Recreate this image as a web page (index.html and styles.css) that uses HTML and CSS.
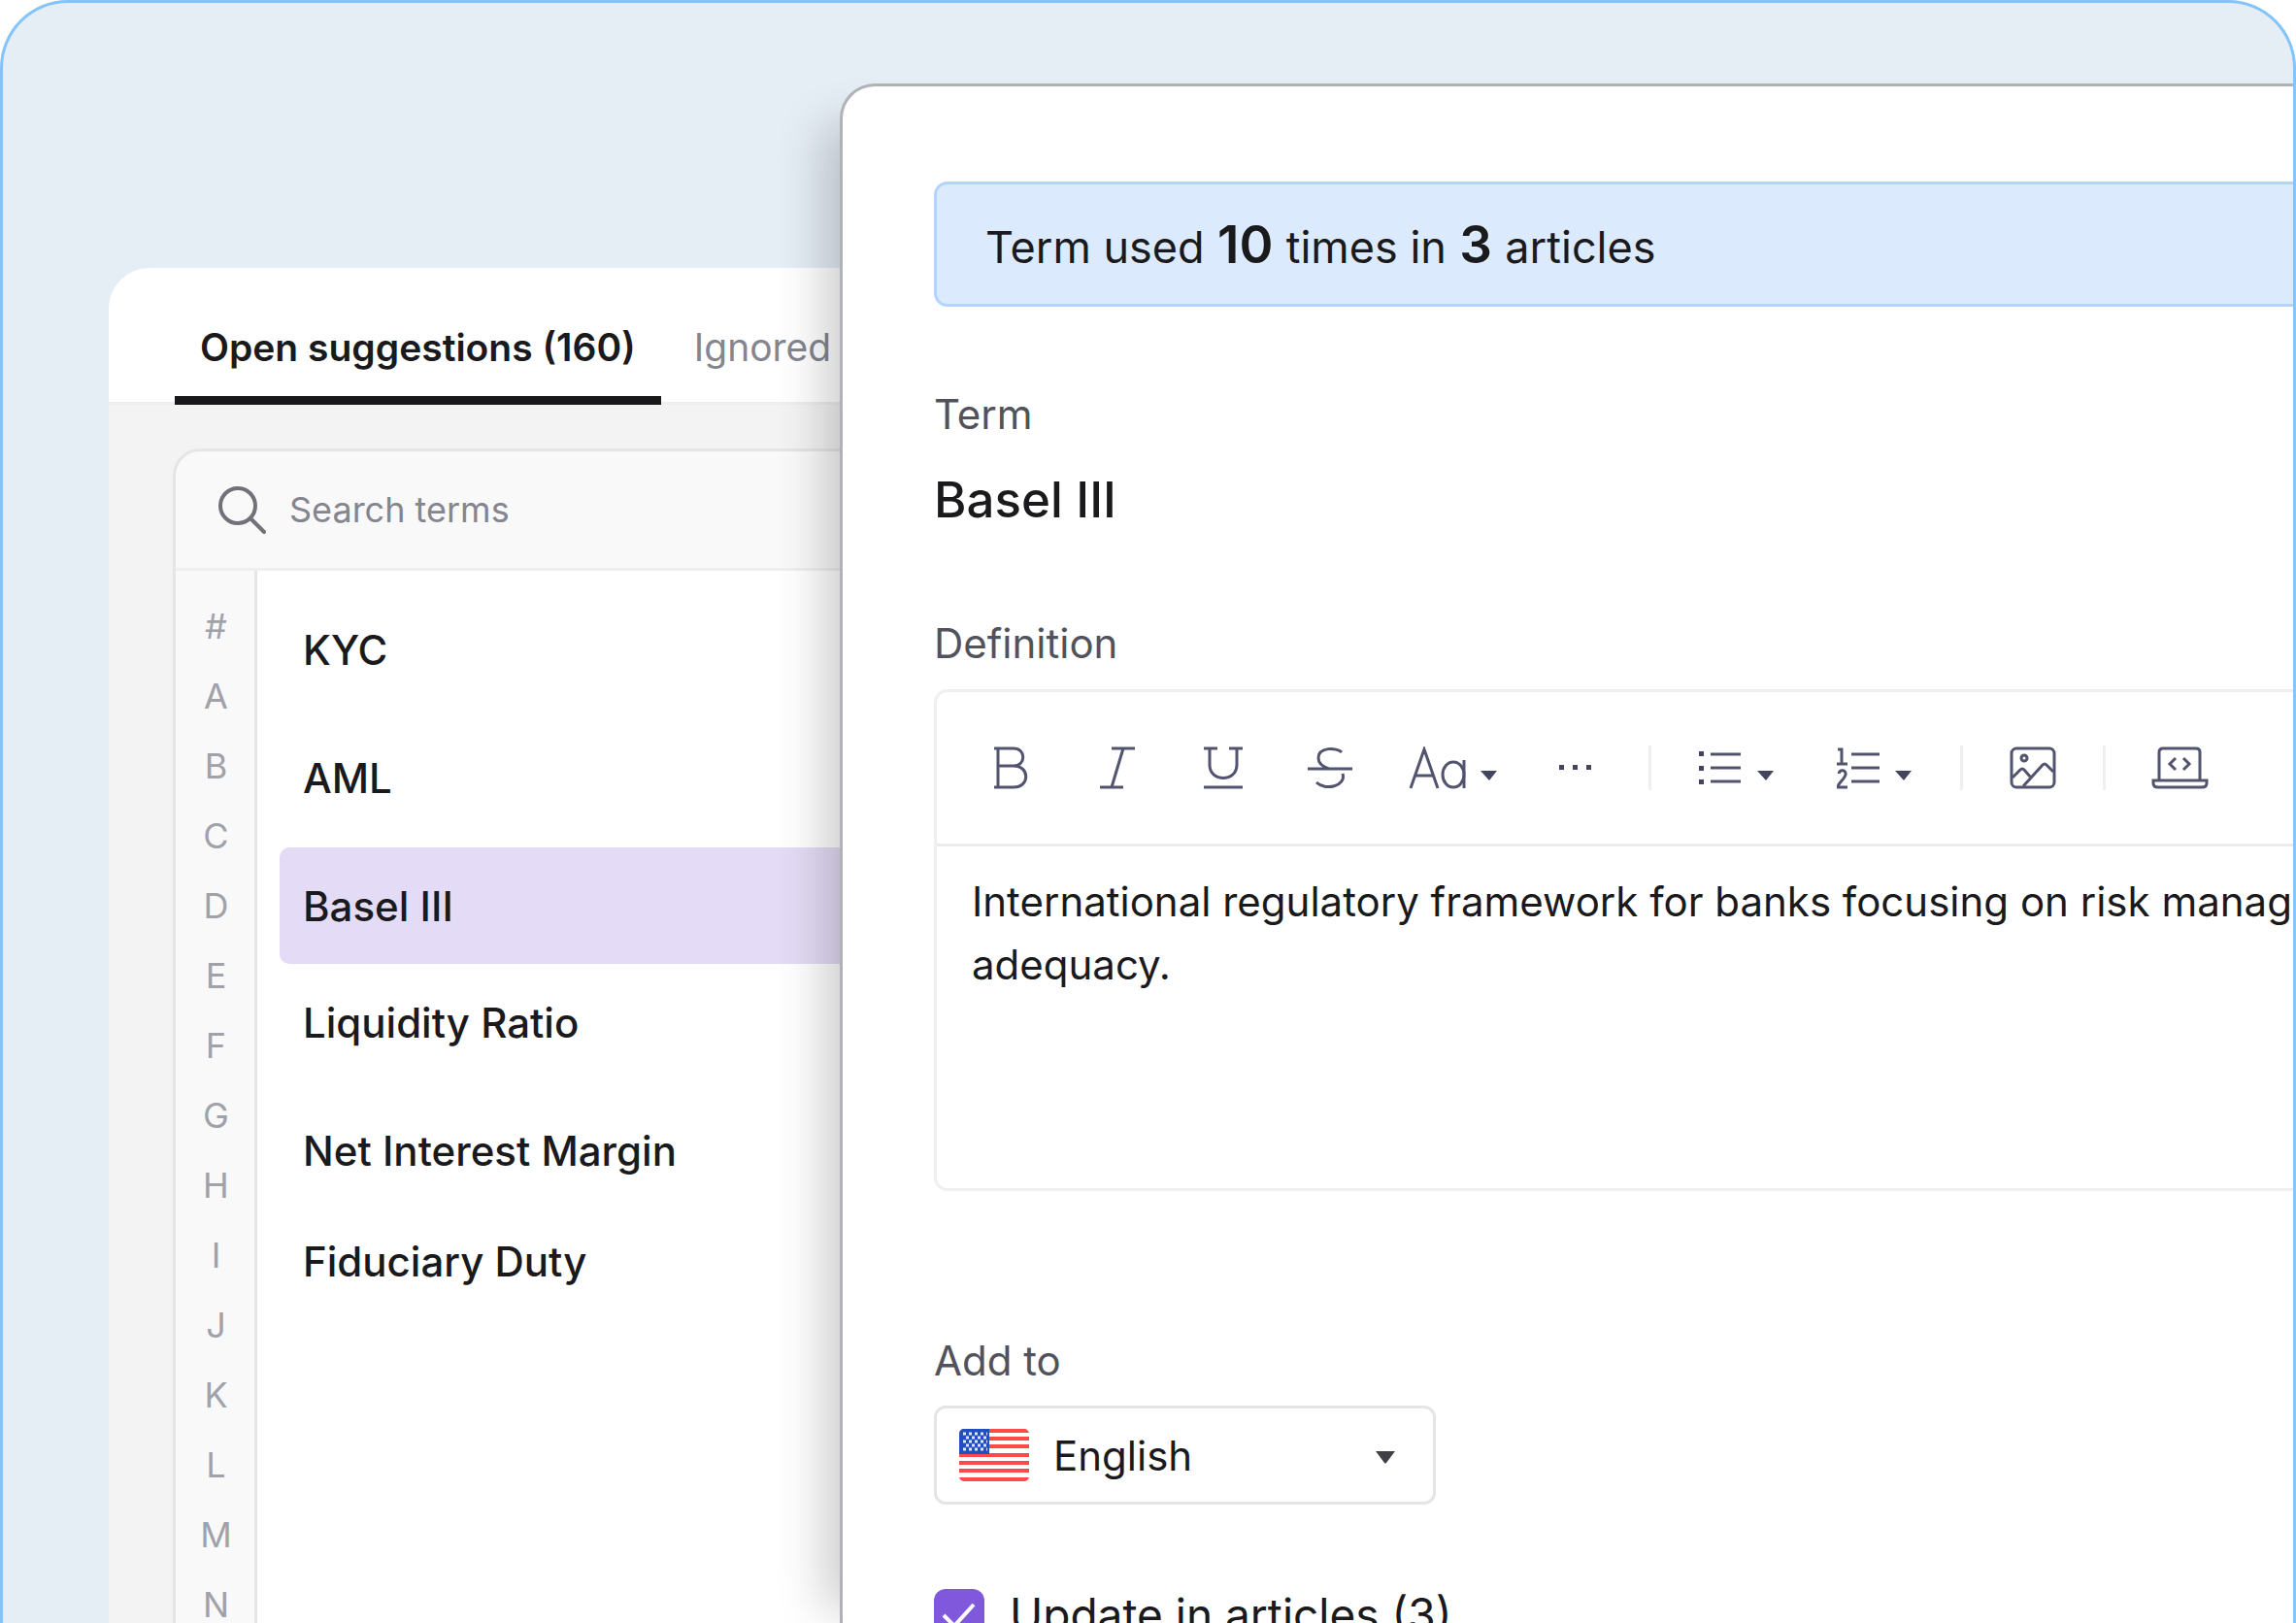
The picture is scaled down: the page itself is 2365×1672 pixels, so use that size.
FILE: index.html
```html
<!DOCTYPE html>
<html lang="en">
<head>
<meta charset="utf-8">
<meta name="viewport" content="width=device-width, initial-scale=1">
<title>Glossary suggestions</title>
<link rel="stylesheet" href="styles.css">
</head>
<body>
<div class="frame">
  <main class="panel">
    <nav class="tabs" aria-label="Suggestions">
      <button class="tab tab-active" type="button">Open suggestions (160)</button>
      <button class="tab" type="button">Ignored</button>
    </nav>
    <section class="glossary">
      <label class="search">
        <svg class="search-icon" viewBox="0 0 50 50" aria-hidden="true"><circle cx="21" cy="21" r="18"/><path d="M34 34 48 48"/></svg>
        <input class="search-input" type="text" placeholder="Search terms" aria-label="Search terms">
      </label>
      <div class="columns">
        <nav class="index" aria-label="Index">
          <a href="#num">#</a><a href="#a">A</a><a href="#b">B</a><a href="#c">C</a><a href="#d">D</a><a href="#e">E</a><a href="#f">F</a><a href="#g">G</a><a href="#h">H</a><a href="#i">I</a><a href="#j">J</a><a href="#k">K</a><a href="#l">L</a><a href="#m">M</a><a href="#n">N</a>
        </nav>
        <div class="terms">
          <div class="term-group">
            <button class="term" type="button">KYC</button>
            <button class="term" type="button">AML</button>
            <button class="term term-selected" type="button">Basel III</button>
          </div>
          <div class="term-group">
            <button class="term" type="button">Liquidity Ratio</button>
            <button class="term" type="button">Net Interest Margin</button>
          </div>
          <button class="term term-short" type="button">Fiduciary Duty</button>
        </div>
      </div>
    </section>
  </main>

  <aside class="drawer">
    <p class="notice">Term used<b> 10 </b>times in<b> 3 </b>articles</p>

    <div class="label">Term</div>
    <h1 class="name">Basel III</h1>

    <label class="label" for="definition">Definition</label>
    <div class="editor">
      <div class="toolbar">
        <div class="tools">
          <button class="tool" type="button" aria-label="Bold"><svg class="icon" viewBox="0 0 56 44" aria-hidden="true"><path d="M10 2H30C43 2 43 20 30 20H14M30 20C47 20 47 42 30 42H10M14 2V42"/></svg></button>
          <button class="tool" type="button" aria-label="Italic"><svg class="icon" viewBox="0 0 56 44" aria-hidden="true"><path d="M22 2H46M10 42H34M34 2 22 42"/></svg></button>
          <button class="tool" type="button" aria-label="Underline"><svg class="icon" viewBox="0 0 56 44" aria-hidden="true"><path d="M8 2H22M34 2H48M14 2V19C14 37 42 37 42 19V2M8 42H48"/></svg></button>
          <button class="tool" type="button" aria-label="Strikethrough"><svg class="icon" viewBox="0 0 56 44" aria-hidden="true"><path d="M41 6C36 1 17 0 17 12 17 18 22 21 28 23M6 23H52M42 28C46 41 24 46 15 37"/></svg></button>
          <button class="tool" type="button" aria-label="Text style"><svg class="icon icon-style" viewBox="0 0 92 44" aria-hidden="true"><path d="M3 43 17 3 31 43M7 30H27"/><ellipse cx="47" cy="29" rx="11" ry="13"/><path d="M58 14V43"/><path class="solid" d="M75 25H92L84 35Z"/></svg></button>
          <button class="tool" type="button" aria-label="More"><svg class="icon" viewBox="0 0 56 44" aria-hidden="true"><path class="solid" d="M11 19h5v5h-5zM25 19h5v5h-5zM39 19h5v5h-5z"/></svg></button>
        </div>
        <span class="divider"></span>
        <div class="tools tools-lists">
          <button class="tool" type="button" aria-label="Bulleted list"><svg class="icon icon-list" viewBox="0 0 80 44" aria-hidden="true"><path class="solid" d="M2 5h5v5H2zM2 20h5v5H2zM2 34h5v5H2z"/><path d="M14 8H45M14 22H45M14 36H45"/><path class="solid" d="M62 25H79L71 35Z"/></svg></button>
          <button class="tool" type="button" aria-label="Numbered list"><svg class="icon icon-list" viewBox="0 0 80 44" aria-hidden="true"><path d="M1 3H5V18M0 18H11M2 28C3 23 10 24 9 29 8 34 1 38 1 42H11"/><path d="M15 8H44M15 22H44M15 36H44"/><path class="solid" d="M60 25H77L69 35Z"/></svg></button>
        </div>
        <span class="divider"></span>
        <button class="tool" type="button" aria-label="Image"><svg class="icon icon-image" viewBox="0 0 50 44" aria-hidden="true"><rect x="3" y="2" width="44" height="40" rx="5"/><circle cx="16" cy="12" r="3"/><path d="M4 32 12 24Q14 22 16 24L22 31M15 41 35 19Q37 17 39 19L46 26"/></svg></button>
        <span class="divider"></span>
        <button class="tool" type="button" aria-label="Embed"><svg class="icon icon-embed" viewBox="0 0 60 44" aria-hidden="true"><path d="M8 34V6Q8 2 12 2H46Q50 2 50 6V34M2 35H57V38Q57 42 52 42H7Q2 42 2 38Z"/><path d="M25 12 19 18 25 24M33 12 39 18 33 24"/></svg></button>
      </div>
      <textarea class="definition" id="definition" wrap="off" spellcheck="false">International regulatory framework for banks focusing on risk management and capital
adequacy.</textarea>
    </div>

    <label class="label" for="language">Add to</label>
    <div class="picker">
      <select class="picker-select" id="language"><option>English</option></select>
      <svg class="flag" viewBox="0 0 72 54" aria-hidden="true">
        <clipPath id="flag-shape"><rect width="72" height="54" rx="5"/></clipPath>
        <g clip-path="url(#flag-shape)">
          <path fill="#fff" d="M0 0H72V54H0z"/>
          <path stroke="#ff4a4a" stroke-width="4" d="M0 2H72M0 10H72M0 18H72M0 27H72M0 35H72M0 43H72M0 52H72"/>
          <path fill="#1f4fc0" d="M0 0H31V26H0z"/>
          <path stroke="#dfe8fa" stroke-width="3" stroke-dasharray="3 3" d="M4 5H29M7 9H28M4 13H29M7 17H28M4 21H29"/>
        </g>
      </svg>
      <svg class="picker-caret" viewBox="0 0 22 14" aria-hidden="true"><path d="M1 1H21L12 13Q11 14 10 13Z"/></svg>
    </div>

    <label class="update">
      <span class="check">
        <input class="check-input" type="checkbox" checked>
        <svg class="check-mark" viewBox="0 0 52 52" aria-hidden="true"><path d="M10 27 21 38 41 16"/></svg>
      </span>
      Update in articles (3)
    </label>
  </aside>
</div>
</body>
</html>
```
FILE: styles.css
```css
* {
  box-sizing: border-box;
}

body {
  margin: 0;
  background: #fff;
  color: #1a1a1c;
  font-family: Inter, "Liberation Sans", sans-serif;
}

button,
input,
select,
textarea {
  margin: 0;
  padding: 0;
  border: 0;
  background: none;
  color: inherit;
  font: inherit;
}

.frame {
  position: relative;
  display: flex;
  flex-direction: column;
  height: 100vh;
  padding: 273px 0 0 109px;
  overflow: hidden;
  border: 3px solid #83c4fc;
  border-bottom: 0;
  border-radius: 70px 70px 0 0;
  background: #e5edf5;
}

/* Suggestions panel */

.panel {
  flex: 1;
  min-height: 0;
  border-radius: 42px 0 0 0;
  background: #f3f3f3;
  overflow: hidden;
}

.tabs {
  display: flex;
  gap: 8px;
  padding: 58px 68px 0;
  border-bottom: 3px solid #eee;
  background: #fff;
}

.tab {
  margin-bottom: -3px;
  padding: 0 26px 26px;
  border-bottom: 9px solid transparent;
  color: #85858f;
  font-size: 39px;
  line-height: 48px;
}

.tab-active {
  border-color: #18181a;
  color: #1a1a1c;
  font-weight: 600;
}

.glossary {
  margin: 45px 0 0 66px;
  border: 3px solid #e5e5e8;
  border-radius: 28px 0 0 0;
  background: #f9f9f9;
  overflow: hidden;
}

.search {
  display: flex;
  align-items: center;
  gap: 24px;
  height: 123px;
  padding-left: 43px;
  border-bottom: 3px solid #efeff0;
}

.search-icon {
  width: 50px;
  height: 50px;
  fill: none;
  stroke: #71717a;
  stroke-width: 4;
  stroke-linecap: round;
}

.search-input {
  flex: 1;
  font-size: 36px;
  line-height: 48px;
}

.search-input::placeholder {
  color: #85858f;
  opacity: 1;
}

.columns {
  display: flex;
}

.index {
  display: flex;
  flex-direction: column;
  width: 84px;
  padding: 21px 0 21px 2px;
  border-right: 3px solid #e5e5e8;
  text-align: center;
}

.index a {
  color: #a1a1aa;
  font-size: 36px;
  line-height: 72px;
  text-decoration: none;
}

.terms {
  flex: 1;
  padding: 21px 0 0 23px;
  background: #fff;
}

.term-group {
  display: flex;
  flex-direction: column;
  gap: 12px;
}

.term {
  width: 100%;
  height: 120px;
  padding-left: 24px;
  border-radius: 10px;
  font-size: 42px;
  font-weight: 500;
  text-align: left;
}

.term-selected {
  background: #e4dcf6;
}

.term-short {
  height: 108px;
}

/* Term drawer, laid over the panel and running off the right edge */

.drawer {
  position: absolute;
  inset: 83px -400px 0 862px;
  padding: 98px 94px 0;
  border: 3px solid #b0b2b5;
  border-bottom: 0;
  border-radius: 36px 0 0 0;
  background: #fff;
  box-shadow: -44px 15px 50px -28px rgba(0, 0, 0, 0.2);
}

.notice {
  margin: 0 0 87px;
  padding: 6px 50px 0;
  border: 3px solid #b3d4ff;
  border-radius: 14px;
  background: #dceafd;
  font-size: 45px;
  line-height: 117px;
}

.notice b {
  font-size: 53px;
  font-weight: 600;
  line-height: 60px;
}

.label {
  display: block;
  color: #52525c;
  font-size: 42px;
  line-height: 48px;
}

.name {
  margin: 34px 0 94px;
  font-size: 51px;
  font-weight: 500;
  line-height: 60px;
}

.editor {
  margin: 23px 0 151px;
  border: 3px solid #efeff1;
  border-radius: 14px;
}

.toolbar {
  display: flex;
  align-items: center;
  gap: 47px;
  height: 159px;
  padding-left: 49px;
  border-bottom: 3px solid #eceaee;
}

.tools {
  display: flex;
  gap: 53px;
}

.tools-lists {
  gap: 64px;
}

.tool {
  display: flex;
}

.icon {
  width: 56px;
  height: 44px;
  fill: none;
  stroke: #52546f;
  stroke-width: 3;
}

.icon-style {
  width: 92px;
}

.icon-list {
  width: 80px;
}

.icon-image {
  width: 50px;
}

.icon-embed {
  width: 60px;
}

.solid {
  fill: #43455f;
  stroke: none;
}

.divider {
  width: 3px;
  height: 46px;
  background: #efeff1;
}

.definition {
  display: block;
  width: 100%;
  height: 352px;
  padding: 24px 36px;
  overflow: hidden;
  resize: none;
  font-size: 42px;
  line-height: 65px;
}

.picker {
  position: relative;
  width: 517px;
  margin: 22px 0 87px;
}

.picker-select {
  width: 100%;
  height: 102px;
  padding: 0 80px 0 120px;
  border: 3px solid #e5e5e8;
  border-radius: 12px;
  appearance: none;
  font-size: 42px;
}

.flag {
  position: absolute;
  top: 24px;
  left: 26px;
  width: 72px;
  height: 54px;
}

.picker-caret {
  position: absolute;
  top: 46px;
  right: 41px;
  width: 22px;
  height: 14px;
  fill: #3f4147;
}

.update {
  display: flex;
  align-items: center;
  gap: 26px;
  font-size: 46px;
  line-height: 52px;
}

.check {
  display: grid;
}

.check-input,
.check-mark {
  grid-area: 1 / 1;
  width: 52px;
  height: 52px;
}

.check-input {
  border-radius: 12px;
  appearance: none;
  background: #8058dc;
}

.check-mark {
  fill: none;
  stroke: #fff;
  stroke-width: 4;
  pointer-events: none;
}
```
